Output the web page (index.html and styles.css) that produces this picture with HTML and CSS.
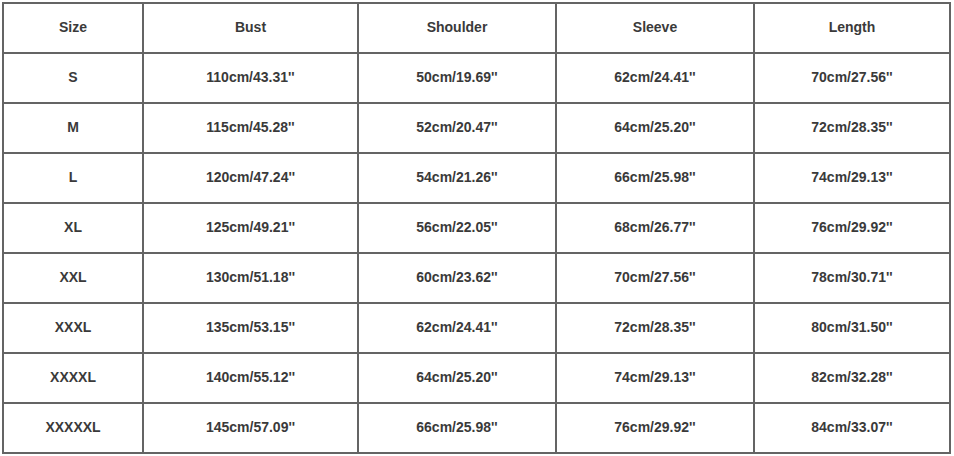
FILE: index.html
```html
<!DOCTYPE html>
<html lang="en">
<head>
<meta charset="utf-8">
<title>Size Chart</title>
<link rel="stylesheet" href="styles.css">
</head>
<body>
<div class="chart" role="table">
  <div class="cell">Size</div><div class="cell">Bust</div><div class="cell">Shoulder</div><div class="cell">Sleeve</div><div class="cell">Length</div>
  <div class="cell">S</div><div class="cell">110cm/43.31''</div><div class="cell">50cm/19.69''</div><div class="cell">62cm/24.41''</div><div class="cell">70cm/27.56''</div>
  <div class="cell">M</div><div class="cell">115cm/45.28''</div><div class="cell">52cm/20.47''</div><div class="cell">64cm/25.20''</div><div class="cell">72cm/28.35''</div>
  <div class="cell">L</div><div class="cell">120cm/47.24''</div><div class="cell">54cm/21.26''</div><div class="cell">66cm/25.98''</div><div class="cell">74cm/29.13''</div>
  <div class="cell">XL</div><div class="cell">125cm/49.21''</div><div class="cell">56cm/22.05''</div><div class="cell">68cm/26.77''</div><div class="cell">76cm/29.92''</div>
  <div class="cell">XXL</div><div class="cell">130cm/51.18''</div><div class="cell">60cm/23.62''</div><div class="cell">70cm/27.56''</div><div class="cell">78cm/30.71''</div>
  <div class="cell">XXXL</div><div class="cell">135cm/53.15''</div><div class="cell">62cm/24.41''</div><div class="cell">72cm/28.35''</div><div class="cell">80cm/31.50''</div>
  <div class="cell">XXXXL</div><div class="cell">140cm/55.12''</div><div class="cell">64cm/25.20''</div><div class="cell">74cm/29.13''</div><div class="cell">82cm/32.28''</div>
  <div class="cell">XXXXXL</div><div class="cell">145cm/57.09''</div><div class="cell">66cm/25.98''</div><div class="cell">76cm/29.92''</div><div class="cell">84cm/33.07''</div>
</div>
</body>
</html>
```
FILE: styles.css
```css
html, body {
  margin: 0;
  padding: 0;
  background: #ffffff;
}
body {
  padding: 2px 0 0 2px;
  font-family: "Liberation Sans", Arial, sans-serif;
}
.chart {
  display: grid;
  grid-template-columns: 138px 213px 196px 196px 194px;
  grid-auto-rows: 48px;
  gap: 2px;
  padding: 2px;
  width: max-content;
  background: #646464;
}
.cell {
  background: #ffffff;
  display: flex;
  align-items: center;
  justify-content: center;
  padding-bottom: 3px;
  box-sizing: border-box;
  font-size: 14px;
  font-weight: bold;
  color: #3a3a3a;
}
```
